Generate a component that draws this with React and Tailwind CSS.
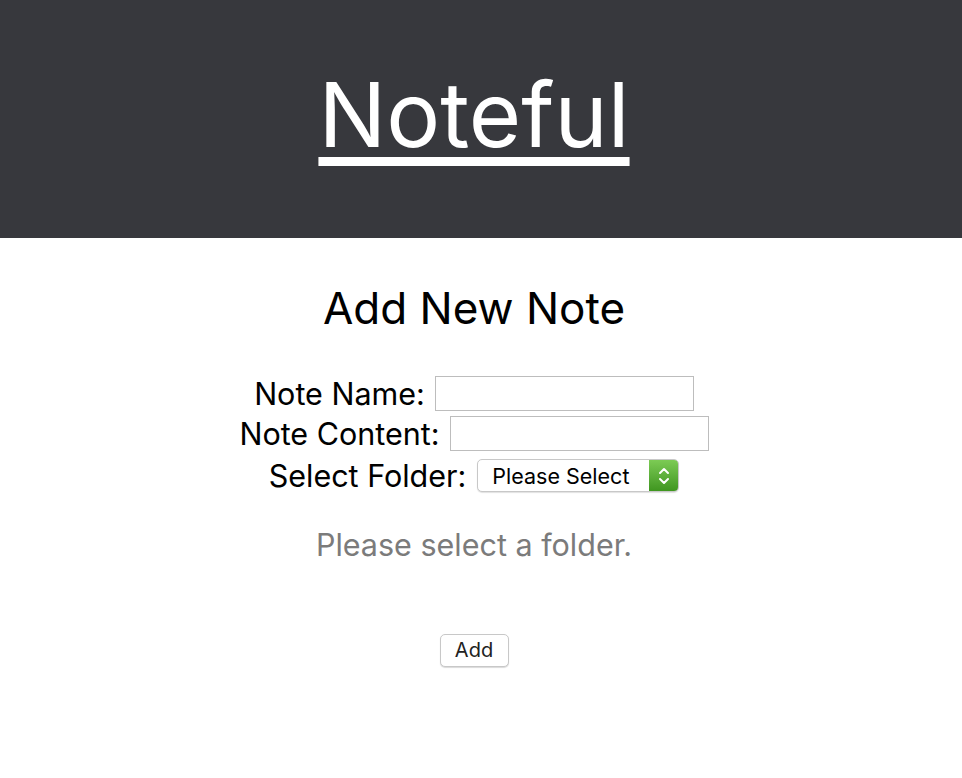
import { useState } from 'react';

function FolderSelect() {
  return (
    <div className="relative inline-flex h-[33px] w-[202px] align-middle rounded-[5px] border border-[#c8c8c8] bg-white shadow-[0_1px_1px_rgba(0,0,0,0.12)] overflow-hidden">
      <select
        defaultValue=""
        className="h-full w-full appearance-none bg-transparent pl-[14px] pr-[34px] text-[21.5px] text-black outline-none"
      >
        <option value="">Please Select</option>
        <option value="important">Important</option>
        <option value="super">Super</option>
        <option value="spangley">Spangley</option>
      </select>
      <span className="pointer-events-none absolute right-0 top-0 flex h-full w-[29px] items-center justify-center bg-gradient-to-b from-[#7ccb54] to-[#3f961f]">
        <svg width="12" height="20" viewBox="0 0 12 20" fill="none" stroke="white" strokeWidth="2" strokeLinecap="round" strokeLinejoin="round">
          <path d="M2 7 L6 3 L10 7" />
          <path d="M2 13 L6 17 L10 13" />
        </svg>
      </span>
    </div>
  );
}

export default function App() {
  const [name, setName] = useState('');
  const [content, setContent] = useState('');

  return (
    <div className="min-h-screen bg-white font-['Inter','Liberation_Sans',sans-serif] text-black">
      <header className="flex h-[238px] items-center justify-center bg-[#37383d] pr-[14px]">
        <h1 className="pb-[8px] text-[90px] font-normal leading-none text-white underline decoration-[9px] underline-offset-[10px]">
          Noteful
        </h1>
      </header>

      <main className="flex flex-col items-center pr-[14px]">
        <h2 className="mt-[44px] text-[44px] font-normal leading-[52px]">Add New Note</h2>

        <form className="mt-[42px] flex flex-col items-center gap-[5px] text-[30.5px]">
          <div className="flex h-[35px] items-center gap-[10px]">
            <label htmlFor="name">Note Name:</label>
            <input
              id="name"
              value={name}
              onChange={(e) => setName(e.target.value)}
              className="h-[35px] w-[259px] border border-[#bdbdbd] px-2 text-[18px] outline-none"
            />
          </div>
          <div className="flex h-[35px] items-center gap-[10px]">
            <label htmlFor="content">Note Content:</label>
            <input
              id="content"
              value={content}
              onChange={(e) => setContent(e.target.value)}
              className="h-[35px] w-[259px] border border-[#bdbdbd] px-2 text-[18px] outline-none"
            />
          </div>
          <div className="mt-[2px] flex h-[35px] items-center gap-[11px]">
            <label>Select Folder:</label>
            <FolderSelect />
          </div>

          <p className="mt-[24px] text-[30.5px] text-[#7b7b7b]">Please select a folder.</p>

          <button
            type="submit"
            className="mt-[61px] h-[33px] w-[69px] rounded-[5px] border border-[#c8c8c8] bg-white text-[20px] text-[#222] shadow-[0_1px_1px_rgba(0,0,0,0.15)]"
          >
            Add
          </button>
        </form>
      </main>
    </div>
  );
}
